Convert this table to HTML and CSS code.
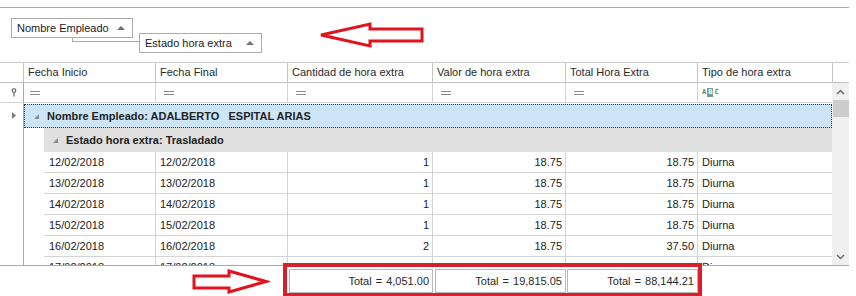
FILE: index.html
```html
<!DOCTYPE html>
<html lang="es">
<head>
<meta charset="utf-8">
<title>Horas extra</title>
<link rel="stylesheet" href="styles.css">
</head>
<body>
<div class="gc">
  <div class="grouppanel">
    <div class="gbox g1"><span>Nombre Empleado</span><span class="sorttri"></span></div>
    <div class="gbox g2"><span>Estado hora extra</span><span class="sorttri"></span></div>
    <div class="conn"></div>
  </div>

  <div class="hdr">
    <div class="hc ind"></div>
    <div class="hc">Fecha Inicio</div>
    <div class="hc">Fecha Final</div>
    <div class="hc">Cantidad de hora extra</div>
    <div class="hc">Valor de hora extra</div>
    <div class="hc">Total Hora Extra</div>
    <div class="hc">Tipo de hora extra</div>
    <div class="hc"></div>
  </div>

  <div class="body">
    <div class="rows">
      <div class="frow">
        <div class="ind"><svg class="pin" width="6" height="9" viewBox="0 0 6 9"><circle cx="3" cy="2.5" r="1.8" fill="none" stroke="#555" stroke-width="1.1"/><line x1="3" y1="4.3" x2="3" y2="8.5" stroke="#555" stroke-width="1.1"/></svg></div>
        <div class="fc first"><span class="eq"></span></div>
        <div class="fc"><span class="eq"></span></div>
        <div class="fc"><span class="eq"></span></div>
        <div class="fc"><span class="eq"></span></div>
        <div class="fc"><span class="eq"></span></div>
        <div class="fc"><span class="abc"><span class="ab-a">A</span><span class="ab-b">B</span><span class="ab-c">C</span></span></div>
      </div>

      <div class="grow1">
        <div class="ind"><svg width="4" height="7" viewBox="0 0 4 7"><polygon points="0,0 4,3.5 0,7" fill="#7a7a7a"/></svg></div>
        <div class="g1c">
          <svg class="caret" width="5" height="5" viewBox="0 0 5 5"><polygon points="5,0 5,5 0,5" fill="#8a8a8a"/></svg>
          <span class="gtext">Nombre Empleado: ADALBERTO&nbsp;&nbsp; ESPITAL ARIAS</span>
        </div>
      </div>

      <div class="grow2">
        <div class="ind"></div>
        <div class="indent"></div>
        <div class="g2c">
          <svg class="caret" width="5" height="5" viewBox="0 0 5 5"><polygon points="5,0 5,5 0,5" fill="#8a8a8a"/></svg>
          <span class="gtext">Estado hora extra: Trasladado</span>
        </div>
      </div>

      <div class="drow">
        <div class="ind"></div><div class="indent"></div>
        <div class="dc first">12/02/2018</div><div class="dc">12/02/2018</div><div class="dc num">1</div><div class="dc num">18.75</div><div class="dc num">18.75</div><div class="dc">Diurna</div>
      </div>
      <div class="drow">
        <div class="ind"></div><div class="indent"></div>
        <div class="dc first">13/02/2018</div><div class="dc">13/02/2018</div><div class="dc num">1</div><div class="dc num">18.75</div><div class="dc num">18.75</div><div class="dc">Diurna</div>
      </div>
      <div class="drow">
        <div class="ind"></div><div class="indent"></div>
        <div class="dc first">14/02/2018</div><div class="dc">14/02/2018</div><div class="dc num">1</div><div class="dc num">18.75</div><div class="dc num">18.75</div><div class="dc">Diurna</div>
      </div>
      <div class="drow">
        <div class="ind"></div><div class="indent"></div>
        <div class="dc first">15/02/2018</div><div class="dc">15/02/2018</div><div class="dc num">1</div><div class="dc num">18.75</div><div class="dc num">18.75</div><div class="dc">Diurna</div>
      </div>
      <div class="drow">
        <div class="ind"></div><div class="indent"></div>
        <div class="dc first">16/02/2018</div><div class="dc">16/02/2018</div><div class="dc num">2</div><div class="dc num">18.75</div><div class="dc num">37.50</div><div class="dc">Diurna</div>
      </div>
      <div class="drow">
        <div class="ind"></div><div class="indent"></div>
        <div class="dc first">17/02/2018</div><div class="dc">17/02/2018</div><div class="dc num">1</div><div class="dc num">18.75</div><div class="dc num">18.75</div><div class="dc">Diurna</div>
      </div>
    </div>
    <div class="vscroll">
      <div class="sbtn"><svg width="9" height="6" viewBox="0 0 9 6"><polyline points="1,5 4.5,1.5 8,5" fill="none" stroke="#6a6a6a" stroke-width="1.5"/></svg></div>
      <div class="thumb"></div>
      <div class="track"></div>
      <div class="sbtn"><svg width="9" height="6" viewBox="0 0 9 6"><polyline points="1,1 4.5,4.5 8,1" fill="none" stroke="#6a6a6a" stroke-width="1.5"/></svg></div>
    </div>
  </div>

  <div class="footer">
    <div class="tot t1">Total = 4,051.00</div>
    <div class="tot t2">Total = 19,815.05</div>
    <div class="tot t3">Total = 88,144.21</div>
  </div>

  <svg class="arrow arrow-top" width="110" height="28" viewBox="0 0 110 28"><polygon points="3,13 52,2 52,7 104,7 104,19 52,19 52,24" fill="none" stroke="#e0141e" stroke-width="3" stroke-linejoin="miter"/></svg>
  <svg class="arrow arrow-bot" width="80" height="30" viewBox="0 0 80 30"><polygon points="4,9 39,9 39,4 76,14.5 39,25 39,21 4,21" fill="none" stroke="#e0141e" stroke-width="3"/></svg>
  <div class="redbox"></div>
</div>
</body>
</html>
```

FILE: styles.css
```css
* { box-sizing: border-box; margin: 0; padding: 0; }

body {
  margin: 0;
  background: #fff;
  font-family: "Liberation Sans", Arial, sans-serif;
  font-size: 11px;
  color: #222;
}

.gc {
  position: relative;
  width: 849px;
  height: 289px;
  margin-top: 7px;
  border-top: 1px solid #a9a9a9;
  overflow: hidden;
}

/* group panel */
.grouppanel {
  position: relative;
  height: 54px;
  display: flex;
  align-items: flex-start;
  gap: 6px;
  padding: 10px 0 0 11px;
}

.gbox {
  display: flex;
  align-items: center;
  justify-content: space-between;
  height: 20px;
  border: 1px solid #ababab;
  background: #fff;
  padding: 0 7px 0 5px;
  color: #222;
}

.g1 { width: 122px; }
.g2 { width: 123px; margin-top: 15px; }

.sorttri {
  width: 0;
  height: 0;
  border-left: 4px solid transparent;
  border-right: 4px solid transparent;
  border-bottom: 4px solid #707070;
}

.conn {
  position: absolute;
  left: 72px;
  top: 30px;
  width: 67px;
  height: 4px;
  border-left: 1px solid #a8a8a8;
  border-bottom: 1px solid #a8a8a8;
}

/* header */
.hdr {
  display: grid;
  grid-template-columns: 23px 132px 132px 145px 133px 132px 135px 17px;
  height: 21px;
  border-top: 1px solid #cfcfcf;
  border-bottom: 1px solid #c4c4c4;
}

.hc {
  border-left: 1px solid #c4c4c4;
  padding-left: 4px;
  line-height: 19px;
  white-space: nowrap;
  overflow: hidden;
  color: #2a2a2a;
}

.hc.ind { border-left: 0; }

/* body */
.body {
  display: flex;
  height: 182px;
}

.rows {
  width: 832px;
  overflow: hidden;
}

.ind {
  width: 24px;
  flex: none;
  border-right: 1px solid #a8a8a8;
  display: flex;
  align-items: center;
  justify-content: center;
  align-self: stretch;
}

.frow {
  display: flex;
  height: 20px;
  border-bottom: 1px solid #d4d4d4;
}

.frow .ind { justify-content: flex-start; padding-left: 11px; }

.fc {
  width: 132px;
  border-left: 1px solid #d4d4d4;
  display: flex;
  align-items: center;
  padding-left: 8px;
}
.fc.first { width: 131px; border-left: 0; padding-left: 6px; }
.fc:nth-child(4) { width: 145px; }
.fc:nth-child(5) { width: 133px; }
.fc:nth-child(7) { width: 135px; padding-left: 4px; }

.eq {
  display: block;
  width: 10px;
  height: 4px;
  border-top: 1px solid #888;
  border-bottom: 1px solid #888;
}

.abc {
  display: flex;
  align-items: center;
  gap: 1px;
  font-family: "DejaVu Sans Mono", monospace;
  font-size: 7px;
  font-weight: bold;
  color: #4f8a78;
  line-height: 9px;
}
.ab-b {
  background: #6f9f90;
  color: #fff;
  padding: 0 1px;
}

/* group rows */
.grow1 {
  display: flex;
  height: 25px;
}

.grow1 .ind { justify-content: flex-start; padding-left: 12px; }

.g1c {
  flex: 1;
  margin-top: 1px;
  background: #cde6f7;
  border: 1px dotted #333;
  display: flex;
  align-items: center;
  padding-left: 9px;
}

.caret { flex: none; margin-right: 8px; }

.gtext {
  font-weight: bold;
  color: #222;
  white-space: pre;
}

.grow2 {
  display: flex;
  height: 24px;
}

.indent { width: 20px; flex: none; }

.g2c {
  flex: 1;
  background: #e0e0e0;
  display: flex;
  align-items: center;
  padding-left: 9px;
}

/* data rows */
.drow {
  display: flex;
  height: 21px;
}

.dc {
  width: 132px;
  border-left: 1px solid #d4d4d4;
  border-bottom: 1px solid #d4d4d4;
  padding: 0 3px 0 4px;
  line-height: 20px;
  white-space: nowrap;
  overflow: hidden;
}
.dc.first { width: 111px; border-left: 0; padding-left: 5px; }
.dc:nth-child(5) { width: 145px; }
.dc:nth-child(6) { width: 133px; }
.dc:nth-child(8) { width: 135px; }
.dc.num { text-align: right; }

/* scrollbar */
.vscroll {
  width: 17px;
  background: #f0f0f0;
  display: flex;
  flex-direction: column;
}
.sbtn {
  height: 17px;
  display: flex;
  align-items: center;
  justify-content: center;
}
.thumb {
  height: 17px;
  margin: 0 0 0 1px;
  background: #cdcdcd;
}
.track { flex: 1; }

/* footer */
.footer {
  display: flex;
  height: 31px;
  border-top: 1px solid #a9a9a9;
  padding: 3px 0 0 289px;
}

.tot {
  height: 24px;
  border: 1px solid #b9b9b9;
  box-shadow: inset 0 0 0 1px #fff;
  text-align: right;
  padding-right: 3px;
  line-height: 22px;
  color: #2a2a2a;
  white-space: pre;
  word-spacing: 1px;
}
.t1 { width: 144px; }
.t2 { width: 131px; margin-left: 2px; }
.t3 { width: 131px; margin-left: 1px; }

/* annotations */
.arrow { position: absolute; }
.arrow-top { left: 318px; top: 14px; }
.arrow-bot { left: 190px; top: 259px; }

.redbox {
  position: absolute;
  left: 283px;
  top: 255px;
  width: 419px;
  height: 34px;
  border: 4px solid #d8202a;
}
```
